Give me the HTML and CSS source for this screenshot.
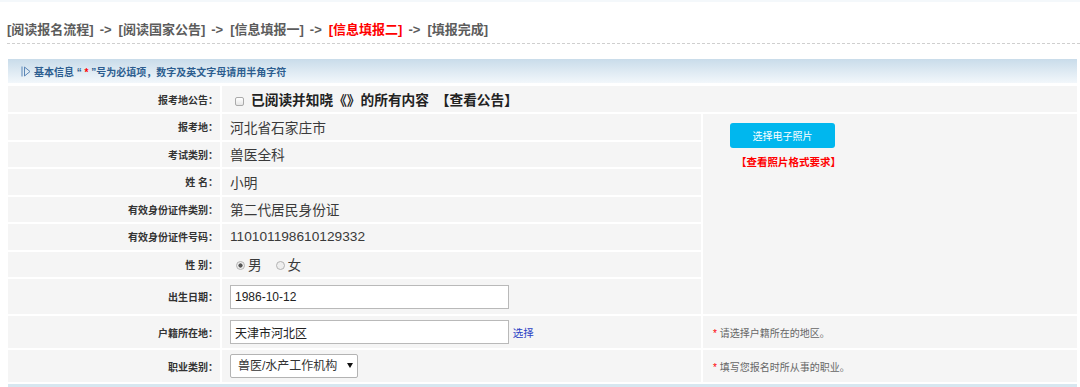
FILE: index.html
```html
<!DOCTYPE html>
<html lang="zh-CN">
<head>
  <meta charset="UTF-8">
  <meta name="viewport" content="width=device-width, initial-scale=1.0">
  <title>信息填报二</title>
  <link rel="stylesheet" href="styles.css">
</head>
<body>
  <div class="page">
    <!-- Step trail -->
    <div class="crumbs">
      <span class="step">[阅读报名流程]</span><span class="arrow">-&gt;</span><span class="step">[阅读国家公告]</span><span class="arrow">-&gt;</span><span class="step">[信息填报一]</span><span class="arrow">-&gt;</span><span class="step current">[信息填报二]</span><span class="arrow">-&gt;</span><span class="step">[填报完成]</span>
    </div>

    <!-- Section title -->
    <div class="section-head">
      <svg class="head-icon" width="10" height="11" viewBox="0 0 10 11">
        <line x1="1" y1="0.5" x2="1" y2="10.5" stroke="#5b86b6" stroke-width="1"/>
        <polygon points="3.5,1 9,5.5 3.5,10" fill="none" stroke="#5b86b6" stroke-width="1"/>
      </svg>
      <span>基本信息 “ <em class="req">*</em> ”号为必填项，数字及英文字母请用半角字符</span>
    </div>

    <!-- Basic info form -->
    <table class="form-table">
      <colgroup>
        <col class="col-label">
        <col class="col-value">
        <col class="col-side">
      </colgroup>
      <tr class="row-notice">
        <th>报考地公告：</th>
        <td colspan="2" class="notice"><input type="checkbox" class="check"><span class="notice-text">已阅读并知晓《》的所有内容 <span class="notice-link">【查看公告】</span></span></td>
      </tr>
      <tr class="row-text">
        <th>报考地：</th>
        <td>河北省石家庄市</td>
        <td rowspan="7" class="photo">
          <button class="photo-btn">选择电子照片</button>
          <div class="photo-tip">【查看照片格式要求】</div>
        </td>
      </tr>
      <tr class="row-text">
        <th>考试类别：</th>
        <td>兽医全科</td>
      </tr>
      <tr class="row-text">
        <th>姓 名：</th>
        <td>小明</td>
      </tr>
      <tr class="row-text">
        <th>有效身份证件类别：</th>
        <td>第二代居民身份证</td>
      </tr>
      <tr class="row-text">
        <th>有效身份证件号码：</th>
        <td>110101198610129332</td>
      </tr>
      <tr class="row-text">
        <th>性 别：</th>
        <td>
          <input type="radio" name="sex" class="radio" checked><span class="radio-text">男</span>
          <input type="radio" name="sex" class="radio"><span class="radio-text">女</span>
        </td>
      </tr>
      <tr class="row-birth">
        <th>出生日期：</th>
        <td><input type="text" class="field" value="1986-10-12"></td>
      </tr>
      <tr class="row-input">
        <th>户籍所在地：</th>
        <td><input type="text" class="field" value="天津市河北区"> <a href="#" class="pick">选择</a></td>
        <td class="hint"><em class="req">*</em> 请选择户籍所在的地区。</td>
      </tr>
      <tr class="row-input">
        <th>职业类别：</th>
        <td>
          <span class="select-wrap">
            <select class="select">
              <option>兽医/水产工作机构</option>
            </select>
          </span>
        </td>
        <td class="hint"><em class="req">*</em> 填写您报名时所从事的职业。</td>
      </tr>
    </table>

    <div class="section-head next"></div>
  </div>
</body>
</html>
```

FILE: styles.css
```css
/* Reset and global styling */
* {
  margin: 0;
  padding: 0;
  box-sizing: border-box;
}

body {
  font-family: "Liberation Sans", "Noto Sans CJK SC", sans-serif;
  background: #fff;
  color: #333;
  border-top: 2px solid #f4f8fb;
}

.page {
  margin: 0 3px 0 8px;
}

/* Step trail */
.crumbs {
  margin-left: -1px;
  padding: 19px 0 4px;
  line-height: 18px;
  font-size: 13px;
  font-weight: bold;
  color: #5c5c5c;
  border-bottom: 1px dashed #cfcfcf;
  margin-right: -3px;
}

.crumbs .current {
  color: #ff0000;
}

.crumbs .arrow {
  margin: 0 7px 0 6px;
}

/* Section title band */
.section-head {
  margin-top: 15px;
  height: 24px;
  padding-left: 13px;
  display: flex;
  align-items: center;
  gap: 3px;
  background: linear-gradient(180deg, #c9dcea, #f2f7fb);
  font-size: 10px;
  font-weight: bold;
  color: #2c5d8f;
}

.section-head.next {
  margin-top: 0;
  height: 12px;
  background: #d7e7f0;
}

.req {
  font-style: normal;
  color: #ff0000;
}

/* Form table */
.form-table {
  margin: 1px -2px 0;
  width: 1073px;
  table-layout: fixed;
  border-collapse: separate;
  border-spacing: 2px;
  font-size: 13.7px;
  color: #3a3a3a;
}

.col-label {
  width: 212px;
}

.col-value {
  width: 479px;
}

.col-side {
  width: 374px;
}

.form-table th,
.form-table td {
  background-color: #f5f5f5;
  vertical-align: middle;
  white-space: nowrap;
}

.form-table th {
  text-align: right;
  font-size: 10px;
  font-weight: bold;
  color: #333;
  padding-right: 2px;
}

.form-table td {
  padding-left: 8px;
  text-align: left;
}

.row-notice {
  height: 26px;
}

.row-text {
  height: 25.5px;
}

.row-birth {
  height: 35px;
}

.row-input {
  height: 32px;
}

/* Notice row */
.check {
  appearance: none;
  width: 9px;
  height: 9px;
  margin: 0 7px 0 5px;
  border: 1px solid #aaa;
  border-radius: 2px;
  background: linear-gradient(180deg, #fff, #e6e6e6);
  vertical-align: -1px;
}

.notice-text {
  font-weight: bold;
  color: #222;
}

.notice-link {
  margin-left: 3px;
}

/* Gender radios */
.radio {
  appearance: none;
  width: 9px;
  height: 9px;
  border: 1px solid #b3b3b3;
  border-radius: 50%;
  background: #eee;
  vertical-align: 0;
  margin-left: 6px;
}

.radio:checked {
  background: radial-gradient(circle, #555 0 1.8px, #eee 2.4px);
}

.radio + .radio-text {
  margin-left: 3px;
}

.radio-text + .radio {
  margin-left: 10px;
}

/* Inputs */
.field {
  width: 279px;
  height: 24px;
  padding: 0 4px;
  border: 1px solid #b9b9b9;
  background: #fff;
  font-family: "Liberation Sans", "Noto Sans CJK SC", sans-serif;
  font-size: 12px;
  color: #222;
  vertical-align: middle;
}

.pick {
  font-size: 10.5px;
  color: #2b3fc4;
  text-decoration: none;
  vertical-align: middle;
}

.select-wrap {
  position: relative;
  display: inline-block;
  vertical-align: middle;
}

.select-wrap::after {
  content: "";
  position: absolute;
  left: 117px;
  top: 9px;
  border-left: 3px solid transparent;
  border-right: 3px solid transparent;
  border-top: 5px solid #111;
  pointer-events: none;
}

.select {
  appearance: none;
  display: block;
  width: 128px;
  height: 24px;
  padding-left: 7px;
  border: 1px solid #b3b3b3;
  border-radius: 2px;
  background: #fff;
  font-family: "Liberation Sans", "Noto Sans CJK SC", sans-serif;
  font-size: 12px;
  color: #333;
}

/* Photo cell */
.form-table td.photo {
  vertical-align: top;
  padding: 9px 0 0 27px;
}

.photo-btn {
  display: block;
  width: 105px;
  height: 25px;
  border: none;
  border-radius: 3px;
  background-color: #00b7ee;
  color: #fff;
  font-family: "Liberation Sans", "Noto Sans CJK SC", sans-serif;
  font-size: 10px;
  cursor: pointer;
}

.photo-tip {
  margin: 7px 0 0 6px;
  line-height: 14px;
  font-size: 10.5px;
  font-weight: bold;
  color: #ff0000;
}

/* Hints */
.form-table td.hint {
  padding-left: 10px;
  font-size: 10px;
  color: #666;
}
```
